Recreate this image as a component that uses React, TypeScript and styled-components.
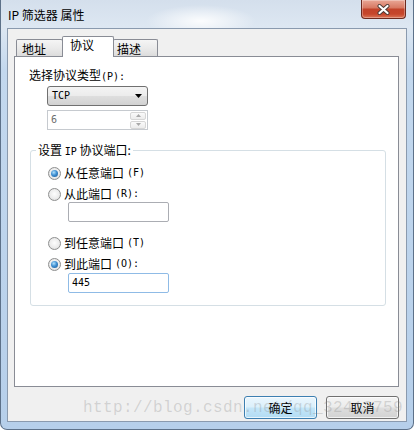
import React from "react";
import styled, { createGlobalStyle, css } from "styled-components";

const GlobalStyle = createGlobalStyle`
  * { box-sizing: border-box; }
  html, body { margin: 0; padding: 0; background: #ffffff; }
  body {
    font-family: "Noto Sans CJK SC", "Noto Sans CJK TC", sans-serif;
    font-size: 12px;
    color: #000;
  }
`;

const Window = styled.div`
  position: relative;
  width: 414px;
  height: 430px;
  display: flex;
  flex-direction: column;
  border: 1px solid #5d7189;
  border-top: none;
  border-radius: 0 0 7px 7px;
  overflow: hidden;
  background:
    radial-gradient(ellipse 55px 16px at 200px 21px, rgba(255, 255, 255, 0.9), rgba(255, 255, 255, 0) 100%),
    linear-gradient(180deg, #d4dfec 0px, #dde7f2 27px, #c3d8ee 70px, #b6cfea 100%);
`;

const TitleBar = styled.div`
  height: 28px;
  flex: none;
  display: flex;
  align-items: flex-start;
  justify-content: space-between;
  padding-left: 7px;
`;

const Title = styled.div`
  align-self: center;
  margin-top: 2px;
  line-height: 14px;
  font-size: 12px;
`;

const CloseButton = styled.div`
  width: 45px;
  height: 19px;
  margin-right: 7px;
  border: 1px solid #6d2a1f;
  border-top: none;
  border-radius: 0 0 4px 4px;
  background: linear-gradient(180deg, #e9a796 0%, #d87a64 42%, #c2432a 52%, #c6462b 78%, #dc7658 100%);
  box-shadow: inset 0 0 0 1px rgba(255, 255, 255, 0.3);
  display: flex;
  align-items: center;
  justify-content: center;
`;

const Client = styled.div`
  flex: 1;
  margin: 0 6px 7px;
  border: 1px solid #8a9aae;
  background: #f0f0f0;
  display: flex;
  flex-direction: column;
  padding: 7px 7px 0 6px;
`;

const TabRow = styled.div`
  height: 20px;
  display: flex;
  align-items: flex-end;
  padding-left: 2px;
`;

const Tab = styled.div<{ $active?: boolean; $w: number; $pl: number }>`
  width: ${(p) => p.$w}px;
  height: 17px;
  padding-left: ${(p) => p.$pl}px;
  padding-top: 2px;
  line-height: 14px;
  border: 1px solid #898c95;
  border-bottom: none;
  border-radius: 2px 2px 0 0;
  background: linear-gradient(180deg, #f5f5f5 0%, #e9e9e9 55%, #dcdcdc 100%);
  margin-left: -1px;
  &:first-child { margin-left: 0; }
  ${(p) =>
    p.$active &&
    css`
      position: relative;
      z-index: 1;
      height: 21px;
      margin-bottom: -1px;
      padding-top: 1px;
      background: #ffffff;
    `}
`;

const Panel = styled.div`
  height: 331px;
  flex: none;
  border: 1px solid #898c95;
  background: #ffffff;
  display: flex;
  flex-direction: column;
  align-items: flex-start;
  padding: 11px 0 0 14px;
`;

const Lat = styled.span`
  font-family: "DejaVu Sans Mono", monospace;
  font-size: 10px;
`;

const FieldLabel = styled.div`
  line-height: 14px;
  white-space: nowrap;
`;

const Combo = styled.div`
  margin: 2px 0 0 18px;
  width: 101px;
  height: 20px;
  border: 1px solid #707070;
  border-radius: 3px;
  background: linear-gradient(180deg, #f4f4f4 0%, #ececec 48%, #dedede 52%, #d2d2d2 100%);
  display: flex;
  align-items: center;
  justify-content: space-between;
  padding: 0 5px 0 4px;
  line-height: 14px;
`;

const Spin = styled.div`
  margin: 4px 0 0 18px;
  width: 101px;
  height: 20px;
  border: 1px solid #c6cacf;
  background: #ffffff;
  display: flex;
  align-items: center;
  justify-content: space-between;
  padding: 0 1px 0 3px;
  color: #6d6d6d;
  line-height: 14px;
`;

const SpinButtons = styled.div`
  display: flex;
  flex-direction: column;
  gap: 1px;
`;

const SpinButton = styled.div`
  width: 16px;
  height: 8px;
  border: 1px solid #d6d6d6;
  border-radius: 2px;
  background: linear-gradient(180deg, #fafafa, #ececec);
  display: flex;
  align-items: center;
  justify-content: center;
`;

const Group = styled.div`
  margin: 20px 0 0 1px;
  width: 356px;
  border: 1px solid #d5dfe5;
  border-radius: 3px;
  display: flex;
  flex-direction: column;
  align-items: flex-start;
  padding: 0 0 12px 17px;
`;

const Legend = styled.div`
  margin: -8px 0 0 -12px;
  padding: 0 2px;
  background: #ffffff;
  line-height: 14px;
  white-space: nowrap;
`;

const RadioRow = styled.div<{ $gap: number }>`
  margin-top: ${(p) => p.$gap}px;
  height: 14px;
  display: flex;
  align-items: center;
  gap: 3px;
  line-height: 14px;
  white-space: nowrap;
`;

const RadioDot = styled.span<{ $checked?: boolean }>`
  flex: none;
  width: 13px;
  height: 13px;
  border-radius: 50%;
  border: 1px solid #8e8f8f;
  background: radial-gradient(circle at 50% 45%, #fdfdfd 0%, #ececec 55%, #d3d3d3 100%);
  display: flex;
  align-items: center;
  justify-content: center;
  ${(p) =>
    p.$checked &&
    css`
      &::after {
        content: "";
        width: 7px;
        height: 7px;
        border-radius: 50%;
        background: radial-gradient(circle at 40% 35%, #b2e2fc 0%, #3f8fd2 45%, #1b5690 100%);
      }
    `}
`;

const TextBox = styled.div<{ $focus?: boolean; $gap: number }>`
  margin: ${(p) => p.$gap}px 0 0 20px;
  width: 101px;
  height: 20px;
  border: 1px solid ${(p) => (p.$focus ? "#8fbbe6" : "#abadb3")};
  border-radius: 2px;
  background: #ffffff;
  padding-left: 3px;
  display: flex;
  align-items: center;
  line-height: 14px;
`;

const ButtonRow = styled.div`
  margin-top: 9px;
  display: flex;
  justify-content: flex-end;
  gap: 9px;
`;

const Button = styled.div<{ $primary?: boolean }>`
  width: 73px;
  height: 23px;
  border: 1px solid ${(p) => (p.$primary ? "#3c7fb1" : "#707070")};
  border-radius: 3px;
  background: ${(p) =>
    p.$primary
      ? "linear-gradient(180deg, #eaf6fd 0%, #dcf0fb 48%, #c4e6f9 52%, #b2dcf4 100%)"
      : "linear-gradient(180deg, #f4f4f4 0%, #ececec 48%, #dedede 52%, #d2d2d2 100%)"};
  box-shadow: inset 0 0 0 1px rgba(255, 255, 255, 0.7);
  display: flex;
  align-items: center;
  justify-content: center;
  line-height: 14px;
`;

const Watermark = styled.div`
  position: absolute;
  left: 82px;
  top: 399px;
  font-family: "Liberation Mono", monospace;
  font-size: 16px;
  letter-spacing: 0.4px;
  line-height: 18px;
  color: rgba(130, 130, 130, 0.28);
  white-space: nowrap;
  pointer-events: none;
`;

const CloseGlyph = () => (
  <svg width="13" height="11" viewBox="0 0 13 11">
    <path d="M2.5 2 L10.5 9 M10.5 2 L2.5 9" stroke="#4a3a36" strokeWidth="4" strokeLinecap="round" />
    <path d="M2.5 2 L10.5 9 M10.5 2 L2.5 9" stroke="#ffffff" strokeWidth="2.2" strokeLinecap="round" />
  </svg>
);

const ArrowDown = ({ color = "#000", w = 7, h = 4 }: { color?: string; w?: number; h?: number }) => (
  <svg width={w} height={h} viewBox={`0 0 ${w} ${h}`}>
    <path d={`M0 0 L${w} 0 L${w / 2} ${h} Z`} fill={color} />
  </svg>
);

const ArrowUp = ({ color = "#000", w = 7, h = 4 }: { color?: string; w?: number; h?: number }) => (
  <svg width={w} height={h} viewBox={`0 0 ${w} ${h}`}>
    <path d={`M0 ${h} L${w} ${h} L${w / 2} 0 Z`} fill={color} />
  </svg>
);

export default function App() {
  return (
    <>
      <GlobalStyle />
      <Window>
        <TitleBar>
          <Title>IP 筛选器 属性</Title>
          <CloseButton>
            <CloseGlyph />
          </CloseButton>
        </TitleBar>
        <Client>
          <TabRow>
            <Tab $w={47} $pl={5}>地址</Tab>
            <Tab $w={52} $pl={7} $active>协议</Tab>
            <Tab $w={45} $pl={3}>描述</Tab>
          </TabRow>
          <Panel>
            <FieldLabel>
              选择协议类型<Lat>(P):</Lat>
            </FieldLabel>
            <Combo>
              <Lat>TCP</Lat>
              <ArrowDown />
            </Combo>
            <Spin>
              <Lat>6</Lat>
              <SpinButtons>
                <SpinButton>
                  <ArrowUp color="#a8a8a8" w={5} h={3} />
                </SpinButton>
                <SpinButton>
                  <ArrowDown color="#a8a8a8" w={5} h={3} />
                </SpinButton>
              </SpinButtons>
            </Spin>
            <Group>
              <Legend>
                设置 <Lat>IP</Lat> 协议端口:
              </Legend>
              <RadioRow $gap={7}>
                <RadioDot $checked />
                从任意端口<Lat>(F)</Lat>
              </RadioRow>
              <RadioRow $gap={7}>
                <RadioDot />
                从此端口<Lat>(R):</Lat>
              </RadioRow>
              <TextBox $gap={1} />
              <RadioRow $gap={14}>
                <RadioDot />
                到任意端口<Lat>(T)</Lat>
              </RadioRow>
              <RadioRow $gap={7}>
                <RadioDot $checked />
                到此端口<Lat>(O):</Lat>
              </RadioRow>
              <TextBox $gap={2} $focus>
                <Lat>445</Lat>
              </TextBox>
            </Group>
          </Panel>
          <ButtonRow>
            <Button $primary>确定</Button>
            <Button>取消</Button>
          </ButtonRow>
        </Client>
        <Watermark>http://blog.csdn.net/qq_32412759</Watermark>
      </Window>
    </>
  );
}
